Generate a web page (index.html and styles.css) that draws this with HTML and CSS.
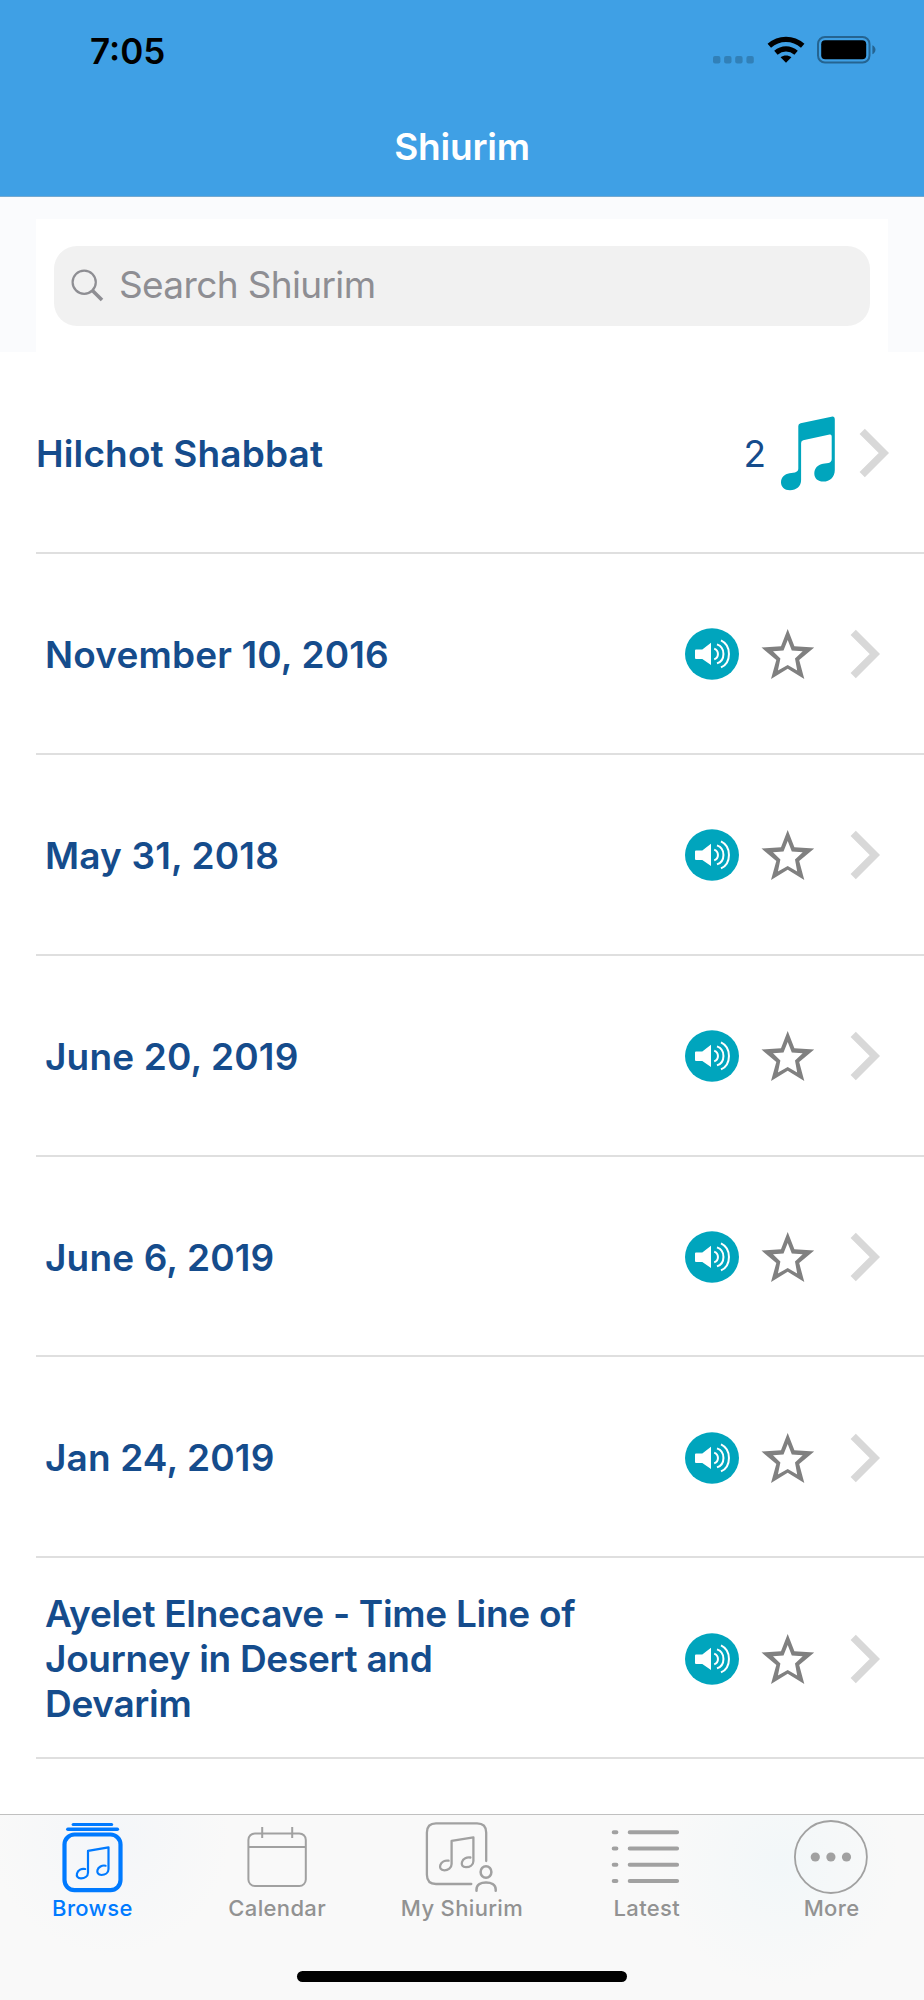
FILE: index.html
```html
<!DOCTYPE html>
<html lang="en">
<head>
    <meta charset="UTF-8">
    <meta name="viewport" content="width=device-width, initial-scale=1.0">
    <title>Shiurim</title>
    <link rel="stylesheet" href="styles.css">
</head>
<body>
    <div class="app">
        <header class="header">
            <div class="status-bar">
                <span class="time">7:05</span>
                <div class="status-icons">
                    <svg class="signal" width="42" height="8" viewBox="0 0 42 8">
                        <rect x="0" y="0" width="7.4" height="7.4" rx="2"/>
                        <rect x="11.1" y="0" width="7.4" height="7.4" rx="2"/>
                        <rect x="22.2" y="0" width="7.4" height="7.4" rx="2"/>
                        <rect x="33.4" y="0" width="7.4" height="7.4" rx="2"/>
                    </svg>
                    <svg class="wifi" width="38" height="28" viewBox="0 0 38 28">
                        <path d="M2.3 9.8C12 1.2 26 1.2 35.7 9.8" fill="none" stroke="#000" stroke-width="5.2"/>
                        <path d="M8.9 16.7C15 11.5 23 11.5 29.1 16.7" fill="none" stroke="#000" stroke-width="5.2"/>
                        <path d="M13.6 21.3C16.8 18.8 21.2 18.8 24.4 21.3L19 26.8Z"/>
                    </svg>
                    <svg class="battery" width="60" height="28" viewBox="0 0 60 28">
                        <rect x="1" y="1" width="51.5" height="25.6" rx="7" fill="none" stroke="#256491" stroke-width="2"/>
                        <rect x="4.2" y="4.3" width="45" height="19" rx="4"/>
                        <path d="M55.4 9.3C59.5 11 59.5 16.6 55.4 18.3Z" fill="#256491"/>
                    </svg>
                </div>
            </div>
            <h1>Shiurim</h1>
        </header>

        <div class="search">
            <div class="search-inner">
                <div class="search-box">
                    <svg width="34" height="34" viewBox="0 0 34 34" fill="none" stroke="#8e8e93">
                        <circle cx="13.2" cy="13.2" r="11.6" stroke-width="2.2"/>
                        <path d="M21.4 21.4L31 31" stroke-width="3.6"/>
                    </svg>
                    <span>Search Shiurim</span>
                </div>
            </div>
        </div>

        <main class="list" id="list">
            <div class="row category">
                <span class="title">Hilchot Shabbat</span>
                <span class="count">2</span>
                <svg class="note" width="54" height="75" viewBox="0 0 54 75">
                    <path d="M17.3 10Q17.3 7.8 19.6 7.2L50.4 .7Q53.8 0 53.8 3.5V54C53.8 61 49 65.6 42.3 65.6C37 65.6 33.3 62.4 33.3 57.5C33.3 52.5 36.6 48.8 42 47.8L47.5 46.9Q50.7 46.3 50.7 43V20.5Q50.7 18.2 48.6 18.6L22.2 24.3Q20.1 24.8 20.1 27V64C20.1 70 15.6 74.3 9 74.3C3.4 74.3 0 71 0 66.3C0 61.5 3.5 58 8.5 57.3L14 56.4Q17.3 55.8 17.3 52.6Z"/>
                </svg>
                <svg class="chevron" width="30" height="50" viewBox="0 0 30 50"><path d="M3.2 3.4L24.8 25L3.2 46.6"/></svg>
            </div>
        </main>

        <nav class="tab-bar">
            <div class="tabs">
                <a class="tab active">
                    <svg width="80" height="76" viewBox="0 0 80 76">
                        <path d="M21.2 7.5H59.6" stroke-width="3.2"/>
                        <path d="M15.8 12.3H65.4" stroke-width="3.4"/>
                        <rect x="12.5" y="17.5" width="56" height="55.6" rx="10" stroke-width="4.2"/>
                        <path stroke-width="2.2" d="M36 33.8V55.5C36 59.5 32.5 61.3 29 61.3C25.5 61.3 24.3 59 25 56.5C26 53 29.5 51.3 33.2 52M36 33.8L56.5 30.3V52C56.5 56 53 58 49.5 58C46 58 44.8 55.5 45.5 53C46.3 50 50 47.9 53.6 48.7"/>
                    </svg>
                    <span>Browse</span>
                </a>
                <a class="tab">
                    <svg width="80" height="76" viewBox="0 0 80 76">
                        <g stroke-width="2" stroke-linecap="butt">
                            <rect x="11.4" y="16.4" width="57.4" height="52.6" rx="6.5"/>
                            <path d="M11.4 30H68.8M25.2 10V21M55.2 10V21"/>
                        </g>
                    </svg>
                    <span>Calendar</span>
                </a>
                <a class="tab">
                    <svg width="80" height="76" viewBox="0 0 80 76">
                        <path stroke-width="2.3" d="M64.2 44V15.5Q64.2 6.3 55 6.3H14Q4.9 6.3 4.9 15.5V57.8Q4.9 67 14 67H49.3"/>
                        <path stroke-width="2.3" d="M29.6 23.8V47C29.6 51 26 53.3 22.3 53.3C18.5 53.3 17.5 50.8 18.3 48.2C19.4 44.8 23 43 26.6 43.7M29.6 23.8L51.4 20.3V44C51.4 48 47.8 50.2 44 50.2C40.3 50.2 39.2 47.6 40 45C41 41.6 44.8 39.8 48.4 40.5"/>
                        <ellipse cx="64" cy="55" rx="5.4" ry="5.8" stroke-width="2.5"/>
                        <path stroke-width="2.5" d="M54.5 73.8V72.5C54.5 67.5 59 65.4 64 65.4S73.7 67.5 73.7 72.5V73.8"/>
                    </svg>
                    <span>My Shiurim</span>
                </a>
                <a class="tab">
                    <svg width="80" height="76" viewBox="0 0 80 76">
                        <path stroke-width="4" d="M6.7 15.3H9.4M22.7 15.3H70.1M6.7 31.5H9.4M22.7 31.5H70.1M6.7 47.8H9.4M22.7 47.8H70.1M6.7 64H9.4M22.7 64H70.1"/>
                    </svg>
                    <span>Latest</span>
                </a>
                <a class="tab">
                    <svg width="80" height="76" viewBox="0 0 80 76">
                        <circle cx="38.9" cy="40" r="36" stroke-width="1.8"/>
                        <g fill="#a1a1a1" stroke="none">
                            <circle cx="23.3" cy="40" r="4.6"/>
                            <circle cx="38.9" cy="40" r="4.6"/>
                            <circle cx="54.5" cy="40" r="4.6"/>
                        </g>
                    </svg>
                    <span>More</span>
                </a>
            </div>
            <div class="home-indicator"></div>
        </nav>
    </div>

    <script>
        const shiurim = [
            'November 10, 2016',
            'May 31, 2018',
            'June 20, 2019',
            'June 6, 2019',
            'Jan 24, 2019',
            'Ayelet Elnecave - Time Line of Journey in Desert and Devarim'
        ];

        const list = document.getElementById('list');

        shiurim.forEach(title => {
            const row = document.createElement('div');
            row.className = 'row';
            row.innerHTML = `
                <span class="title${title.length > 30 ? ' long' : ''}">${title}</span>
                <svg class="audio" width="54" height="52" viewBox="0 0 54 52">
                    <ellipse cx="27" cy="26" rx="27" ry="25.8" fill="#00a5bd"/>
                    <path fill="#fff" d="M11 21.5H17.3L26 14.8V37L17.3 31H11Q10 31 10 30V22.5Q10 21.5 11 21.5Z"/>
                    <path fill="none" stroke="#fff" stroke-width="2" d="M29.2 20.6C34.2 22.4 34.2 29.6 29.2 31.4M32 16.4C40.6 19.4 40.6 32.4 32 35.4M36 12.3C46.6 17.4 46.6 34.4 36 39.4"/>
                </svg>
                <svg class="star" width="54" height="52" viewBox="0 0 54 52">
                    <path fill-rule="evenodd" d="M26.7 1L33.4 18.3L53.2 19.5L38.2 32L43.3 51L26.7 40.8L10 51L15.3 32L.5 19.5L20 18.2ZM26.7 12L30.8 22.4L41.7 23.2L34 30.6L36.2 42.6L26.7 37L16.9 42.6L19.4 30.6L12 23.2L22.5 22.4Z"/>
                </svg>
                <svg class="chevron" width="30" height="50" viewBox="0 0 30 50"><path d="M3.2 3.4L24.8 25L3.2 46.6"/></svg>
            `;
            list.appendChild(row);
        });
    </script>
</body>
</html>
```
FILE: styles.css
```css
* {
    margin: 0;
    padding: 0;
    box-sizing: border-box;
}

body {
    background-color: #fff;
    font-family: Inter, 'Liberation Sans', sans-serif;
}

.app {
    width: 924px;
    height: 2000px;
    display: flex;
    flex-direction: column;
    overflow: hidden;
}

.header {
    flex: none;
    height: 197px;
    background-color: #3fa0e5;
    border-bottom: 1px solid #74a9d0;
}

.status-bar {
    height: 100px;
    padding: 28px 47px 0 90px;
    display: flex;
    justify-content: space-between;
    align-items: flex-start;
}

.time {
    font-size: 35px;
    font-weight: 600;
    line-height: 46px;
}

.status-icons {
    display: flex;
    align-items: flex-end;
    height: 36px;
}

.signal {
    fill: #3180b8;
}

.wifi {
    margin-left: 12px;
}

.battery {
    margin-left: 12px;
}

h1 {
    color: #fff;
    font-size: 37px;
    font-weight: 600;
    line-height: 46px;
    letter-spacing: -0.2px;
    padding-top: 24px;
    text-align: center;
}

.search {
    flex: none;
    height: 155px;
    padding: 22px 36px 0;
    background-color: #fafbfd;
}

.search-inner {
    height: 133px;
    padding: 27px 18px 26px;
    background-color: #fff;
}

.search-box {
    height: 80px;
    padding-left: 17px;
    display: flex;
    align-items: center;
    gap: 14px;
    border-radius: 23px;
    background-color: #f1f1f1;
    color: #8e8e93;
    font-size: 37px;
    letter-spacing: -0.65px;
}

.search-box span {
    padding-bottom: 3px;
}

.list {
    flex: 1;
    min-height: 0;
    padding: 1px 0 0 36px;
    overflow: hidden;
}

.row {
    height: 200.9px;
    padding: 2px 44px 0 9px;
    display: flex;
    align-items: center;
    border-bottom: 2px solid #dfdfdf;
}

.row.category {
    padding: 2px 35px 0 0;
}

.title {
    width: 540px;
    color: #154c8c;
    font-size: 37px;
    font-weight: 600;
    line-height: 45px;
    letter-spacing: 0.15px;
}

.title.long {
    letter-spacing: -0.3px;
}

.category .title {
    flex: 1;
}

.count {
    color: #154c8c;
    font-size: 37px;
    margin-right: 15px;
}

.note {
    fill: #00a5bd;
    margin-right: 24px;
}

.audio {
    margin-left: auto;
    margin-right: 22px;
}

.star {
    fill: #808080;
    margin-right: 35px;
}

.chevron {
    fill: none;
    stroke: #d8d8d8;
    stroke-width: 7.4;
}

.row svg {
    flex: none;
}

.tab-bar {
    flex: none;
    height: 186px;
    border-top: 1px solid #c0c0c0;
    background-color: #f9f9f9;
    background-image:
        radial-gradient(circle at 110px 20px, #f4f6f9, rgba(249, 249, 249, 0) 120px),
        radial-gradient(circle at 780px 50px, #f2f7f9, rgba(249, 249, 249, 0) 120px);
}

.tabs {
    height: 156px;
    padding-top: 2px;
    display: flex;
}

.tab {
    flex: 1;
    display: flex;
    flex-direction: column;
    align-items: center;
    color: #929292;
    font-size: 22px;
    font-weight: 500;
    line-height: 30px;
    letter-spacing: 0.35px;
}

.tab svg {
    overflow: visible;
    fill: none;
    stroke: #a1a1a1;
    stroke-linecap: round;
    stroke-linejoin: round;
}

.tab.active {
    color: #007aff;
}

.tab.active svg {
    stroke: #007aff;
}

.home-indicator {
    width: 330px;
    height: 11px;
    margin: 0 auto;
    border-radius: 6px;
    background-color: #000;
}
```
